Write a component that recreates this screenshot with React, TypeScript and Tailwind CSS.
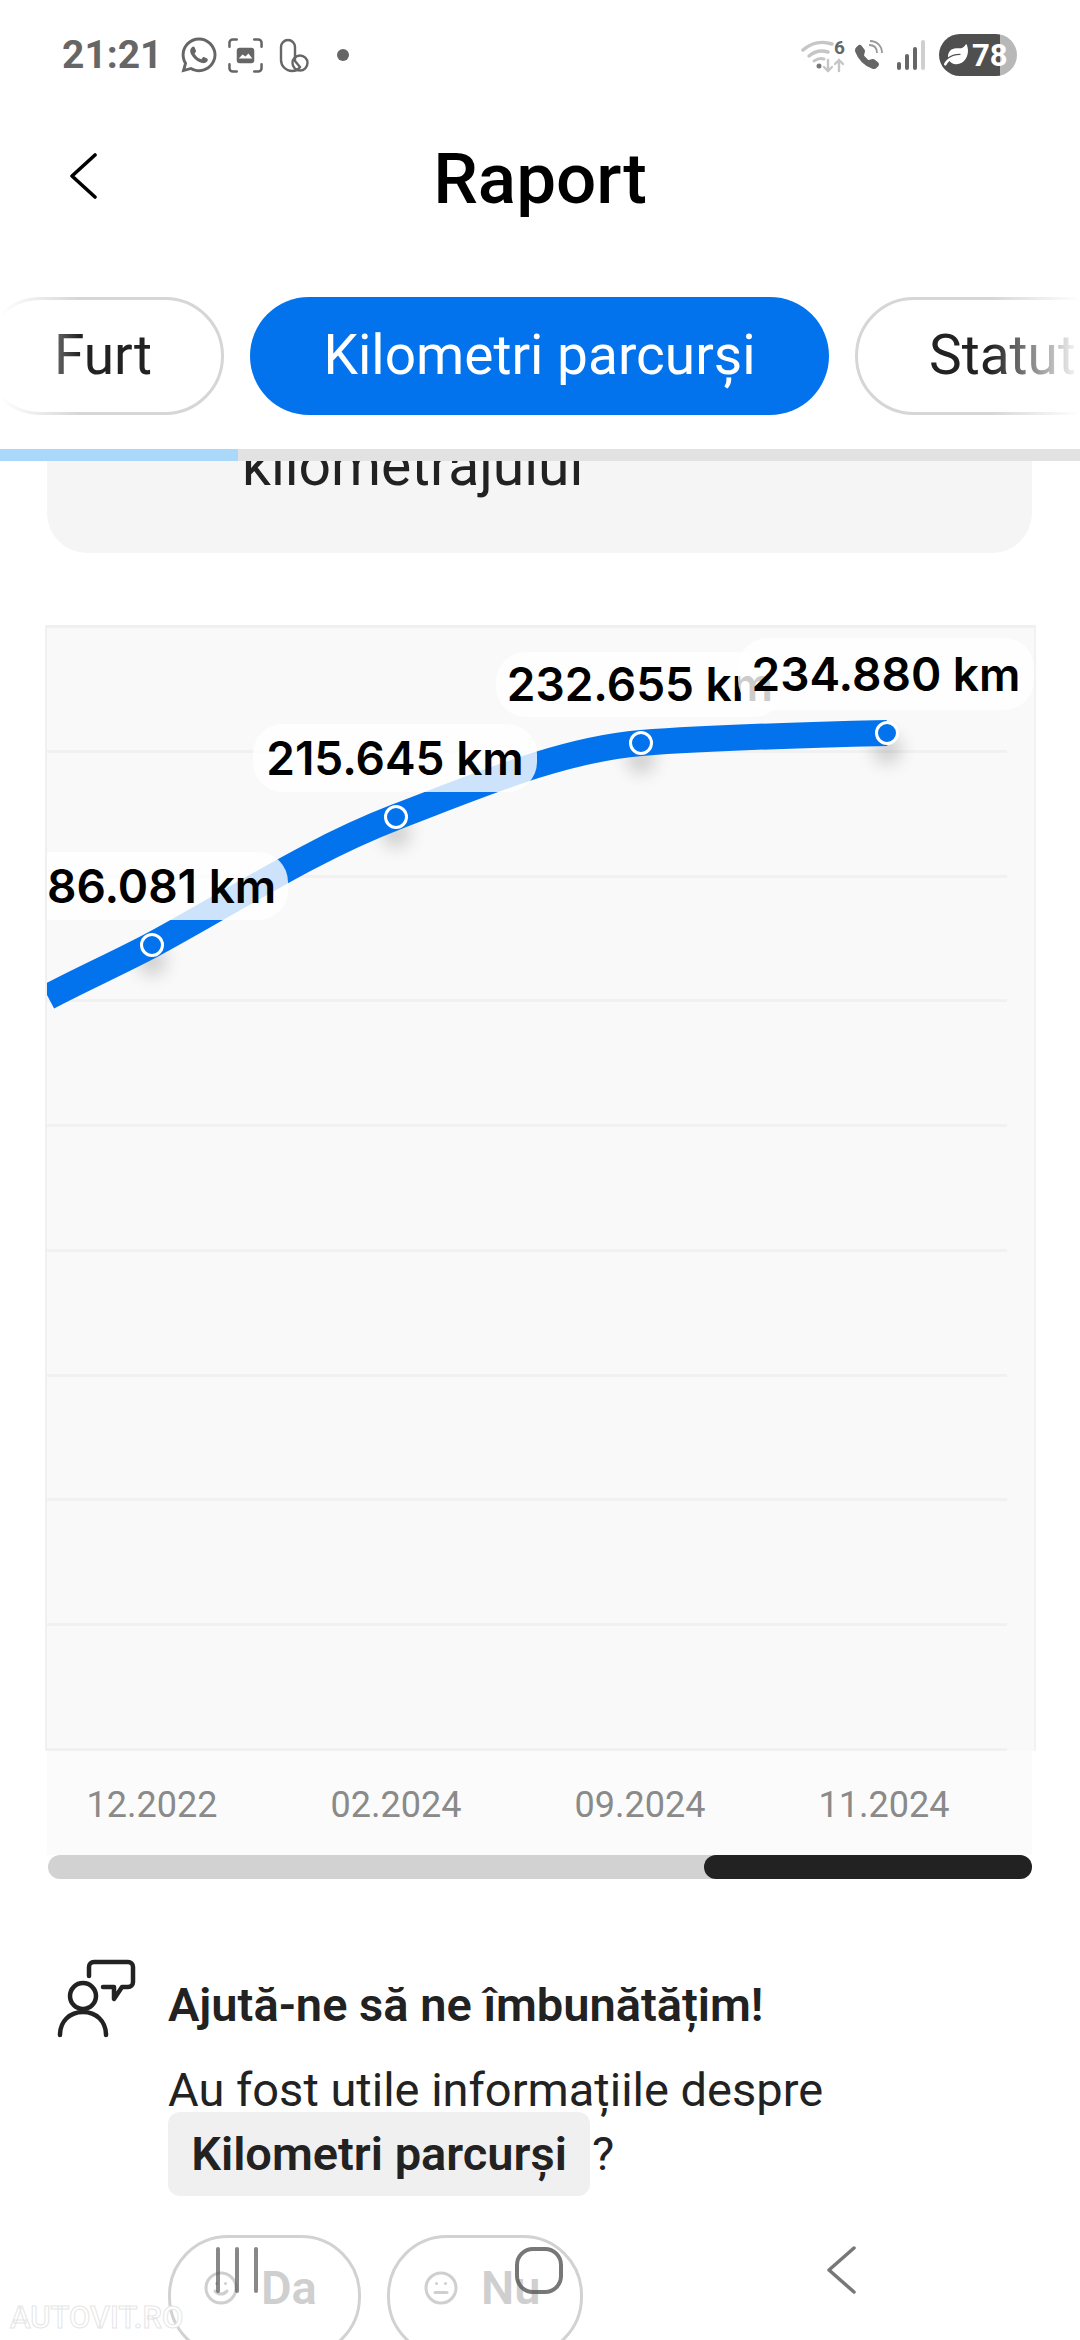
import { BsTelephoneFill } from "react-icons/bs";
import { FaLeaf, FaWhatsapp } from "react-icons/fa";
import { Meh, Smile } from "lucide-react";

function CaptureIcon() {
  return (
    <svg viewBox="0 0 36 36" className="h-[35px] w-[35px]" fill="none" stroke="#666" strokeWidth="2.6" strokeLinecap="round">
      <path d="M1.5 9V5a3.5 3.5 0 0 1 3.5-3.5h4M27 1.500h4A3.500 3.500 0 0 1 34.500 5v4M34.500 27v4a3.500 3.500 0 0 1-3.500 3.500h-4M9 34.500H5A3.500 3.500 0 0 1 1.500 31v-4" />
      <rect x="9" y="10" width="18" height="16" rx="3" fill="#666" stroke="none" />
      <path d="M11 21l4-4 3 2 3-3 4 5z" fill="#fff" stroke="none" />
    </svg>
  );
}

function AppIcon() {
  return (
    <svg viewBox="0 0 30 35" className="h-[35px] w-[30px]" fill="none" stroke="#666" strokeWidth="2.4">
      <path d="M2 9a7 7 0 0 1 14 0v14l5 6c-2 3-5 4-8 4-6 0-11-5-11-11z" />
      <circle cx="21" cy="25" r="7.500" />
    </svg>
  );
}

function WifiIcon() {
  return (
    <svg viewBox="0 0 46 36" className="h-[36px] w-[46px]" fill="none" strokeLinecap="round">
      <path d="M2 13c9-8 20-9 29-6" stroke="#c6c6c6" strokeWidth="3.500" />
      <path d="M8 19c6-5 13-6 19-4" stroke="#c6c6c6" strokeWidth="3.500" />
      <path d="M13 24c3-2 7-3 10-2" stroke="#c6c6c6" strokeWidth="3" />
      <circle cx="18" cy="29" r="2.500" fill="#777" />
      <text x="33" y="17" fontSize="19" fontWeight="700" fill="#666" fontFamily="Roboto, sans-serif">6</text>
      <path d="M27 23v11M23 30l4 4 4-4" stroke="#c6c6c6" strokeWidth="2.400" />
      <path d="M38 34V23M34 27l4-4 4 4" stroke="#c6c6c6" strokeWidth="2.400" />
    </svg>
  );
}

function CallIcon() {
  return (
    <div className="relative h-[32px] w-[30px]">
      <BsTelephoneFill className="absolute bottom-0 left-0 h-[28px] w-[24px] text-[#666]" />
      <svg viewBox="0 0 30 32" className="absolute inset-0 h-[32px] w-[30px]" fill="none" stroke="#999" strokeWidth="1.800">
        <path d="M14 6c5 0 8 3 8 8" />
        <path d="M15 2c7 0 12 5 12 12" />
      </svg>
    </div>
  );
}

function SignalIcon() {
  return (
    <div className="flex h-[30px] items-end gap-[4px]">
      <div className="h-[8px] w-[4px] rounded-full bg-[#666]" />
      <div className="h-[16px] w-[4px] rounded-full bg-[#666]" />
      <div className="h-[23px] w-[4px] rounded-full bg-[#666]" />
      <div className="h-[30px] w-[4px] rounded-full bg-[#cfcfcf]" />
    </div>
  );
}

function FeedbackIcon() {
  return (
    <svg viewBox="0 0 80 80" className="h-[80px] w-[80px]" fill="none" stroke="#222" strokeWidth="4.500" strokeLinecap="round" strokeLinejoin="round">
      <circle cx="27" cy="38" r="13" />
      <path d="M4 77c0-14 10-23 23-23s23 9 23 23" />
      <path d="M33 18V9a5 5 0 0 1 5-5h34a5 5 0 0 1 5 5v15a5 5 0 0 1-5 5h-6l-8 12V29H47" />
    </svg>
  );
}

const sans = "[font-family:Roboto,sans-serif]";

const dots = [
  { x: 107, y: 320 },
  { x: 351, y: 192 },
  { x: 596, y: 118 },
  { x: 842, y: 108 },
];

const gridRows = [0, 1, 2, 3, 4, 5, 6, 7, 8];

export default function App() {
  return (
    <div className={`relative h-[2340px] w-[1080px] overflow-hidden bg-white ${sans}`}>
      {/* Status bar */}
      <div className="flex h-[110px] items-center justify-between pl-[62px] pr-[63px]">
        <div className="flex items-center">
          <span className="text-[39px] font-bold leading-none text-[#666]">21:21</span>
          <FaWhatsapp className="ml-[16px] h-[40px] w-[40px] text-[#666]" />
          <div className="ml-[9px]">
            <CaptureIcon />
          </div>
          <div className="ml-[16px]">
            <AppIcon />
          </div>
          <div className="ml-[28px] h-[12px] w-[12px] rounded-full bg-[#666]" />
        </div>
        <div className="flex items-center">
          <WifiIcon />
          <div className="ml-[8px]">
            <CallIcon />
          </div>
          <div className="ml-[12px]">
            <SignalIcon />
          </div>
          <div className="ml-[14px] flex h-[42px] w-[78px] items-center overflow-hidden rounded-full bg-[linear-gradient(90deg,#4f4f4f_78%,#b8b8b8_78%)] pl-[5px]">
            <FaLeaf className="h-[24px] w-[24px] text-white" />
            <span className="ml-[4px] text-[31px] font-bold leading-none text-white">78</span>
          </div>
        </div>
      </div>

      {/* Header */}
      <div className="relative flex h-[136px] items-center justify-center">
        <svg viewBox="0 0 28 46" className="absolute left-[69px] top-[43px] h-[46px] w-[28px]" fill="none" stroke="#000" strokeWidth="3.600" strokeLinecap="round" strokeLinejoin="round">
          <path d="M26 2L3 23l23 21" />
        </svg>
        <h1 className="text-[71px] font-medium leading-none text-black">Raport</h1>
      </div>

      {/* Tabs */}
      <div className="relative mt-[51px] flex h-[118px] gap-[26px] overflow-hidden">
        <div className="-ml-[18px] flex w-[242px] shrink-0 items-center justify-center rounded-full border-[3px] border-[#d6d6d6] pb-[2px] text-[55px] text-[#222]">
          Furt
        </div>
        <div className="flex w-[579px] shrink-0 items-center justify-center rounded-full bg-[#0273ec] pb-[2px] text-[55px] text-white">
          Kilometri parcurși
        </div>
        <div className="flex w-[300px] shrink-0 items-center rounded-full border-[3px] border-[#d6d6d6] pb-[2px] pl-[71px] text-[55px] text-[#222]">
          Statut
        </div>
        <div className="absolute inset-y-0 left-0 w-[80px] bg-gradient-to-r from-white to-transparent" />
        <div className="absolute inset-y-0 right-0 w-[90px] bg-gradient-to-l from-white to-transparent" />
      </div>

      {/* Tabs scroll position */}
      <div className="mt-[34px] h-[12px] bg-[#e2e2e2]">
        <div className="h-full w-[238px] bg-[#aad8fb]" />
      </div>

      {/* Card scrolled under the tabs */}
      <div className="mx-[47px] h-[92px] w-[985px] overflow-hidden rounded-b-[40px] bg-[#f5f5f5] pl-[195px]">
        <p className="-mt-[31px] text-[57px] leading-[72px] text-[#222]">kilometrajului</p>
      </div>

      {/* Chart */}
      <div className="relative ml-[45px] mt-[72px] h-[1126px] w-[991px] overflow-hidden border-x-[2px] border-t-[3px] border-[#f0f0f0] border-r-[#f2f2f2] bg-[#f9f9f9]">
        <div className="flex h-full w-[960px] flex-col">
          {gridRows.map((row) => (
            <div key={row} className="flex-1 border-b-[3px] border-[#f1f1f1]" />
          ))}
        </div>
        <svg viewBox="0 0 991 1126" className="absolute left-[-2px] top-[-3px] h-[1126px] w-[991px]" fill="none">
          <defs>
            <filter id="dotShadow" x="-100%" y="-100%" width="300%" height="300%">
              <feGaussianBlur stdDeviation="9" />
            </filter>
          </defs>
          {dots.map((dot) => (
            <ellipse key={dot.x} cx={dot.x} cy={dot.y + 16} rx="14" ry="14" fill="#000" opacity="0.18" filter="url(#dotShadow)" />
          ))}
          <path
            d="M3 372C35 355 75 337 107 320C187 277 265 225 351 192C435 160 515 125 596 118C675 112 755 110 842 108"
            stroke="#0273ec"
            strokeWidth="26"
          />
          {dots.map((dot) => (
            <circle key={dot.x} cx={dot.x} cy={dot.y} r="10.500" fill="#0273ec" stroke="#fff" strokeWidth="3" />
          ))}
        </svg>

        {/* Value labels sit over the line */}
        <div className="absolute left-0 top-[224px] flex h-[68px] w-[241px] items-center rounded-r-[30px] bg-white/80 text-[46px] font-semibold text-black [font-family:Inter,sans-serif]">
          86.081 km
        </div>
        <div className="absolute left-[206px] top-[96px] flex h-[68px] w-[284px] items-center justify-center rounded-[30px] bg-white/80 text-[46px] font-semibold text-black [font-family:Inter,sans-serif]">
          215.645 km
        </div>
        <div className="absolute left-[449px] top-[24px] flex h-[65px] w-[288px] items-center justify-center rounded-[30px] bg-white/80 text-[46px] font-semibold text-black [font-family:Inter,sans-serif]">
          232.655 km
        </div>
        <div className="absolute left-[691px] top-[10px] flex h-[72px] w-[296px] items-center justify-center rounded-[30px] bg-white/80 text-[46px] font-semibold text-black [font-family:Inter,sans-serif]">
          234.880 km
        </div>
      </div>

      {/* X axis */}
      <div className="ml-[47px] flex h-[104px] w-[985px] items-center bg-[#fbfbfb] pt-[3px]">
        {["12.2022", "02.2024", "09.2024", "11.2024"].map((label, index) => (
          <div key={label} className={`w-[244px] text-center text-[36px] text-[#8a8a8a] ${index === 0 ? "ml-[-17px]" : ""}`}>
            {label}
          </div>
        ))}
      </div>

      {/* Chart scrollbar */}
      <div className="ml-[48px] flex h-[24px] w-[984px] justify-end rounded-full bg-[#d2d2d2]">
        <div className="h-full w-[328px] rounded-full bg-[#222]" />
      </div>

      {/* Feedback */}
      <div className="mt-[79px] flex pl-[56px]">
        <FeedbackIcon />
        <div className="ml-[32px] mt-[19px]">
          <h2 className="text-[47px] font-semibold leading-[56px] text-[#222]">Ajută-ne să ne îmbunătățim!</h2>
          <p className="mt-[28px] text-[47px] leading-[58px] text-[#222]">Au fost utile informațiile despre</p>
          <div className="-mt-[7px] flex items-center text-[47px] text-[#222]">
            <span className="flex h-[84px] w-[422px] items-center justify-center rounded-[12px] bg-[#f0f0f0] font-semibold">
              Kilometri parcurși
            </span>
            <span className="ml-[2px]">?</span>
          </div>
          <div className="mt-[39px] flex gap-[26px]">
            <div className="flex h-[122px] w-[193px] shrink-0 items-start gap-[22px] rounded-[60px] border-[3px] border-[#d2d2d2] pl-[32px] pt-[20px] text-[47px] font-semibold leading-[60px] text-[#cfcfcf]">
              <Smile className="mt-[12px] h-[36px] w-[36px]" strokeWidth={2} />
              Da
            </div>
            <div className="flex h-[122px] w-[196px] shrink-0 items-start gap-[22px] rounded-[60px] border-[3px] border-[#d2d2d2] pl-[33px] pt-[20px] text-[47px] font-semibold leading-[60px] text-[#cfcfcf]">
              <Meh className="mt-[12px] h-[36px] w-[36px]" strokeWidth={2} />
              Nu
            </div>
          </div>
        </div>
      </div>

      {/* Android navigation, drawn over the page */}
      <div className="absolute left-[86px] top-[2246px] flex h-[48px] items-center">
        <div className="flex w-[302px] items-center justify-center gap-[15px]">
          <div className="h-[46px] w-[4px] rounded-full bg-[#555]/70" />
          <div className="h-[46px] w-[4px] rounded-full bg-[#555]/70" />
          <div className="h-[46px] w-[4px] rounded-full bg-[#555]/70" />
        </div>
        <div className="flex w-[302px] items-center justify-center">
          <div className="h-[47px] w-[48px] rounded-[18px] border-[4px] border-[#555]/80" />
        </div>
        <div className="flex w-[302px] items-center justify-center">
          <svg viewBox="0 0 30 48" className="h-[48px] w-[30px]" fill="none" stroke="#777" strokeWidth="3.500" strokeLinecap="round" strokeLinejoin="round">
            <path d="M28 2L3 24l25 22" />
          </svg>
        </div>
      </div>

      {/* Watermark */}
      <div className="absolute left-[10px] top-[2300px] text-[31px] font-medium leading-[36px] text-white [-webkit-text-stroke:1px_#e6e6e6]">
        AUTOVIT.RO
      </div>
    </div>
  );
}
